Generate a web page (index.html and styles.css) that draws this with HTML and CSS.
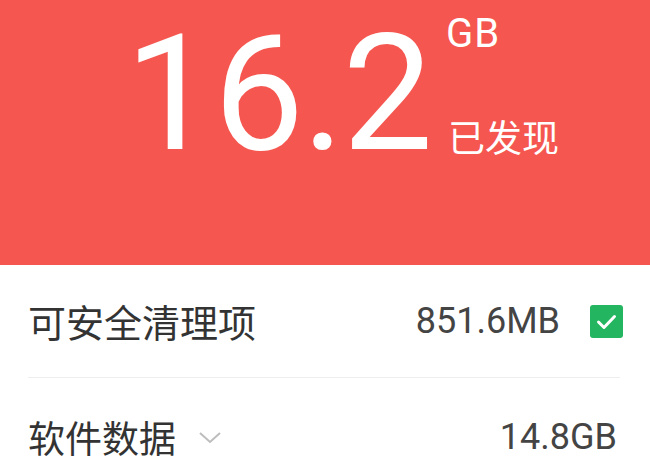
FILE: index.html
```html
<!DOCTYPE html>
<html lang="zh">
<head>
<meta charset="utf-8">
<link rel="stylesheet" href="styles.css">
</head>
<body>
<div class="hero">
  <div class="big">16.2</div>
  <div class="side">
    <div class="unit">GB</div>
    <div class="found">已发现</div>
  </div>
</div>
<div class="list">
  <div class="row row-first">
    <div class="label">可安全清理项</div>
    <div class="right">
      <span class="value">851.6MB</span>
      <span class="check">
        <svg width="33" height="33" viewBox="0 0 33 33"><path d="M8.5 17 L14 22.5 L24.5 11.5" fill="none" stroke="#fff" stroke-width="3" stroke-linecap="round" stroke-linejoin="round"/></svg>
      </span>
    </div>
  </div>
  <div class="divider"></div>
  <div class="row row-second">
    <div class="label-group">
      <span class="label label-second">软件数据</span>
      <svg class="chev" width="24" height="14" viewBox="0 0 24 14"><path d="M2 2 L12 11 L22 2" fill="none" stroke="#bdbdbd" stroke-width="2"/></svg>
    </div>
    <span class="value value-second">14.8GB</span>
  </div>
</div>
</body>
</html>
```
FILE: styles.css
```css
html, body {
  margin: 0;
  padding: 0;
  background: #ffffff;
}
body {
  width: 650px;
  height: 468px;
  overflow: hidden;
  font-family: Roboto, "Noto Sans CJK SC", sans-serif;
}
.hero {
  height: 265px;
  background: #f5564f;
  display: flex;
  align-items: flex-start;
  padding-left: 125px;
  box-sizing: border-box;
  color: #ffffff;
}
.big {
  font-family: Roboto, sans-serif;
  font-size: 161px;
  line-height: 1.17;
  letter-spacing: -2px;
}
.side {
  margin-left: 15px;
  display: flex;
  flex-direction: column;
}
.unit {
  font-family: Roboto, sans-serif;
  font-size: 40px;
  line-height: 1;
  letter-spacing: 1px;
  margin-top: 14px;
}
.found {
  font-family: "Noto Sans CJK SC", sans-serif;
  font-size: 37px;
  line-height: 1;
  margin-top: 64px;
  margin-left: 2px;
}
.list {
  display: flex;
  flex-direction: column;
}
.row {
  display: flex;
  align-items: center;
  justify-content: space-between;
  padding-left: 28px;
}
.row-first {
  height: 112px;
  padding-right: 27px;
}
.row-second {
  height: 40px;
  padding-top: 39px;
  padding-right: 33px;
}
.label {
  font-family: "Noto Sans CJK SC", sans-serif;
  font-size: 38px;
  color: #333333;
  line-height: 1;
}
.label-second {
  font-size: 37px;
}
.label-group {
  display: flex;
  align-items: center;
}
.chev {
  margin-left: 22px;
  margin-top: 2px;
}
.right {
  display: flex;
  align-items: center;
}
.value {
  font-family: Roboto, sans-serif;
  font-size: 36px;
  color: #444444;
  line-height: 1;
}
.check {
  width: 33px;
  height: 33px;
  margin-left: 30px;
  background: #23b55f;
  border-radius: 3px;
  display: flex;
}
.divider {
  height: 1px;
  background: #eeeeee;
  margin: 0 30px 0 28px;
}
```
